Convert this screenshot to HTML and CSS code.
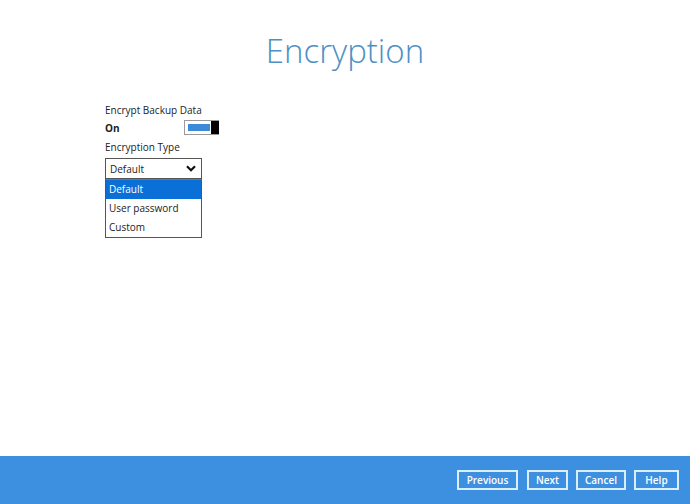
FILE: index.html
```html
<!DOCTYPE html>
<html>
<head>
<meta charset="utf-8">
<link rel="stylesheet" href="styles.css">
</head>
<body>
<div class="page">
  <main class="main">
    <h1 class="title">Encryption</h1>
    <section class="form">
      <div class="label">Encrypt Backup Data</div>
      <div class="toggle-row">
        <span class="state">On</span>
        <span class="toggle"><span class="track"></span><span class="knob"></span></span>
      </div>
      <div class="label label-type">Encryption Type</div>
      <div class="select">
        <span>Default</span>
        <svg class="chev" width="10" height="7" viewBox="0 0 10 7"><path d="M1 1.2 L5 5.2 L9 1.2" fill="none" stroke="#111" stroke-width="2.2"/></svg>
      </div>
      <ul class="options">
        <li class="opt selected">Default</li>
        <li class="opt">User password</li>
        <li class="opt">Custom</li>
      </ul>
    </section>
  </main>
  <footer class="footer">
    <button class="btn btn-prev">Previous</button>
    <button class="btn btn-next">Next</button>
    <button class="btn btn-cancel">Cancel</button>
    <button class="btn btn-help">Help</button>
  </footer>
</div>
</body>
</html>
```
FILE: styles.css
```css
html, body { margin: 0; padding: 0; }
body { font-family: "Open Sans", "Noto Sans", sans-serif; color: #222; background: #fff; }
.page { width: 690px; height: 504px; display: flex; flex-direction: column; }
.main { flex: 1; }
.title {
  margin: 29px 0 0;
  text-align: center;
  font-weight: 300;
  font-size: 33px;
  line-height: 44px;
  color: #4d8fc4;
}
.form { margin: 29px 0 0 105px; width: 114px; font-size: 10px; }
.label { line-height: 16px; color: #222; }
.toggle-row { display: flex; align-items: center; justify-content: space-between; height: 19px; }
.state { font-weight: 700; }
.toggle { display: flex; align-items: stretch; width: 35px; height: 15px; box-sizing: border-box; border: 1px solid #9a9a9a; border-right: none; background: #fff; }
.track { flex: 1; margin: 3px 1px 3px 3px; background: #3c8ad8; }
.knob { width: 8px; background: #000; }
.label-type { margin-top: 2px; }
.select {
  margin-top: 3px;
  width: 97px; height: 21px; box-sizing: border-box;
  border: 1px solid #555;
  display: flex; align-items: center; justify-content: space-between;
  padding: 0 5px 0 4px;
}
.options { list-style: none; margin: 0; padding: 0; width: 97px; box-sizing: border-box; border: 1px solid #555; border-top: 1px solid #777; }
.opt { height: 19px; line-height: 19px; padding-left: 3px; }
.opt.selected { background: #0a6fd6; color: #fff; }
.footer {
  height: 48px; background: #3d8fe0;
  display: flex; justify-content: flex-end; align-items: center;
  gap: 8px; padding-right: 11px; box-sizing: border-box;
}
.btn {
  height: 20px; box-sizing: border-box;
  border: 2px solid #dbeefb; background: transparent;
  color: #fff; font-family: "Open Sans", "Noto Sans", sans-serif; font-size: 10px; font-weight: 600;
  padding: 0; line-height: 16px; text-align: center;
}
.btn-prev { width: 61px; margin-right: 1px; }
.btn-next { width: 41px; }
.btn-cancel { width: 50px; }
.btn-help { width: 45px; }
```
